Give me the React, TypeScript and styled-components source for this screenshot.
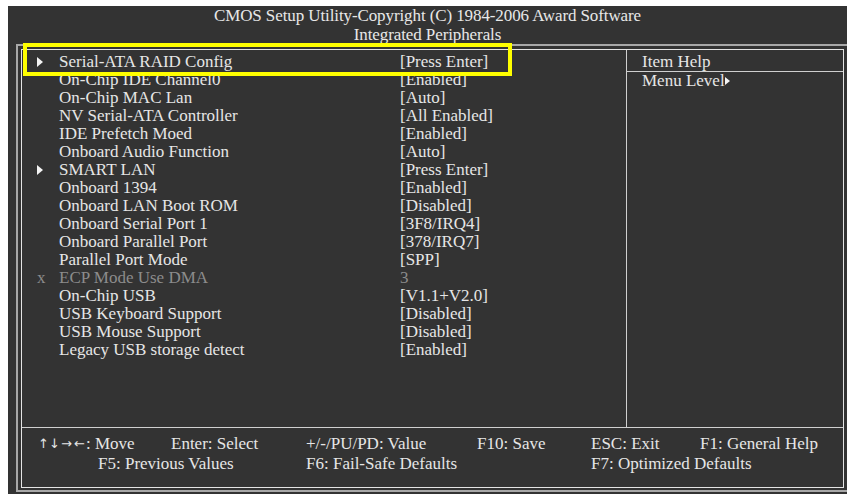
import React, { FC } from 'react'
import styled, { createGlobalStyle } from 'styled-components'

const GlobalStyle = createGlobalStyle`
  html, body {
    margin: 0;
    padding: 0;
    background: #ffffff;
  }
  body {
    font-family: "Liberation Serif", "Times New Roman", serif;
  }
`

const Screen = styled.div`
  position: relative;
  margin: 6px 0 0 8px;
  width: 839px;
  height: 488px;
  background: #333333;
  color: #e6e6e6;
  font-size: 17px;
  overflow: hidden;
`

const Title = styled.div`
  height: 38px;
  box-sizing: border-box;
  text-align: center;
  font-size: 17px;
  line-height: 19px;
  letter-spacing: -0.1px;
  color: #e8e8e8;
`

const OuterFrame = styled.div`
  margin-left: 8px;
  width: 834px;
  height: 448px;
  box-sizing: border-box;
  border: 2px solid #a8a8a8;
  border-right: none;
  padding: 3px 0 0 3px;
`

const InnerFrame = styled.div`
  width: 823px;
  height: 439px;
  box-sizing: border-box;
  border: 1px solid #e4e4e4;
  display: grid;
  grid-template-rows: 378px 1fr;
`

const Main = styled.div`
  display: grid;
  grid-template-columns: 605px 1fr;
  border-bottom: 1px solid #d0d0d0;
`

const ItemList = styled.div`
  padding-top: 3px;
  border-right: 1px solid #d0d0d0;
`

const Row = styled.div<{ $disabled?: boolean }>`
  display: flex;
  height: 18px;
  line-height: 18px;
  color: ${p => (p.$disabled ? '#8c8c8c' : '#e6e6e6')};
  white-space: nowrap;
`

const Marker = styled.span`
  width: 22px;
  margin-left: 15px;
  display: flex;
  align-items: center;
`

const Triangle = styled.span<{ $size?: number }>`
  display: inline-block;
  width: 0;
  height: 0;
  border-top: ${p => p.$size ?? 5}px solid transparent;
  border-bottom: ${p => p.$size ?? 5}px solid transparent;
  border-left: ${p => (p.$size ?? 5) + 1}px solid #f4f4f4;
`

const Label = styled.span`
  width: 341px;
`

const Value = styled.span``

const Help = styled.div`
  padding-top: 3px;
`

const HelpTitle = styled.div`
  height: 18px;
  line-height: 18px;
  padding-left: 15px;
  border-bottom: 1px solid #d0d0d0;
`

const HelpLine = styled.div`
  height: 18px;
  line-height: 20px;
  padding-left: 15px;
  display: flex;
  align-items: center;
`

const Footer = styled.div`
  display: grid;
  grid-template-columns: 133px 135px 171px 114px 109px 1fr;
  grid-auto-rows: 20px;
  padding: 6px 0 0 16px;
  line-height: 20px;
  white-space: nowrap;
`

const Key = styled.span<{ $indent?: number; $col?: number }>`
  padding-left: ${p => p.$indent ?? 0}px;
  grid-column: ${p => p.$col ?? 'auto'};
`

const Arrow = styled.span<{ $wide?: boolean }>`
  display: inline-block;
  width: ${p => (p.$wide ? 13 : 11)}px;
  text-align: center;
  overflow: hidden;
  font-family: "DejaVu Sans", sans-serif;
  font-size: 13px;
  line-height: 20px;
  vertical-align: top;
`

const Highlight = styled.div`
  position: absolute;
  left: 15px;
  top: 37px;
  width: 489px;
  height: 33px;
  box-sizing: border-box;
  border: 4px solid #ffff00;
`

type Item = { label: string; value: string; sub?: boolean; disabled?: boolean }

const items: Item[] = [
  { label: 'Serial-ATA RAID Config', value: '[Press Enter]', sub: true },
  { label: 'On-Chip IDE Channel0', value: '[Enabled]' },
  { label: 'On-Chip MAC Lan', value: '[Auto]' },
  { label: 'NV Serial-ATA Controller', value: '[All Enabled]' },
  { label: 'IDE Prefetch Moed', value: '[Enabled]' },
  { label: 'Onboard Audio Function', value: '[Auto]' },
  { label: 'SMART LAN', value: '[Press Enter]', sub: true },
  { label: 'Onboard 1394', value: '[Enabled]' },
  { label: 'Onboard LAN Boot ROM', value: '[Disabled]' },
  { label: 'Onboard Serial Port 1', value: '[3F8/IRQ4]' },
  { label: 'Onboard Parallel Port', value: '[378/IRQ7]' },
  { label: 'Parallel Port Mode', value: '[SPP]' },
  { label: 'ECP Mode Use DMA', value: '3', disabled: true },
  { label: 'On-Chip USB', value: '[V1.1+V2.0]' },
  { label: 'USB Keyboard Support', value: '[Disabled]' },
  { label: 'USB Mouse Support', value: '[Disabled]' },
  { label: 'Legacy USB storage detect', value: '[Enabled]' },
]

const App: FC = () => (
  <>
    <GlobalStyle />
    <Screen>
      <Title>
        CMOS Setup Utility-Copyright (C) 1984-2006 Award Software
        <br />
        Integrated Peripherals
      </Title>
      <OuterFrame>
        <InnerFrame>
          <Main>
            <ItemList>
              {items.map(item => (
                <Row key={item.label} $disabled={item.disabled}>
                  <Marker>
                    {item.sub && <Triangle />}
                    {item.disabled && 'x'}
                  </Marker>
                  <Label>{item.label}</Label>
                  <Value>{item.value}</Value>
                </Row>
              ))}
            </ItemList>
            <Help>
              <HelpTitle>Item Help</HelpTitle>
              <HelpLine>
                Menu Level
                <Triangle $size={4} />
              </HelpLine>
            </Help>
          </Main>
          <Footer>
            <Key>
              <Arrow>↑</Arrow>
              <Arrow>↓</Arrow>
              <Arrow $wide>→</Arrow>
              <Arrow $wide>←</Arrow>
              : Move
            </Key>
            <Key>Enter: Select</Key>
            <Key>+/-/PU/PD: Value</Key>
            <Key>F10: Save</Key>
            <Key>ESC: Exit</Key>
            <Key>F1: General Help</Key>
            <Key $col={1} $indent={60}>F5: Previous Values</Key>
            <Key $col={3}>F6: Fail-Safe Defaults</Key>
            <Key $col={5}>F7: Optimized Defaults</Key>
          </Footer>
        </InnerFrame>
      </OuterFrame>
      <Highlight />
    </Screen>
  </>
)

export default App
